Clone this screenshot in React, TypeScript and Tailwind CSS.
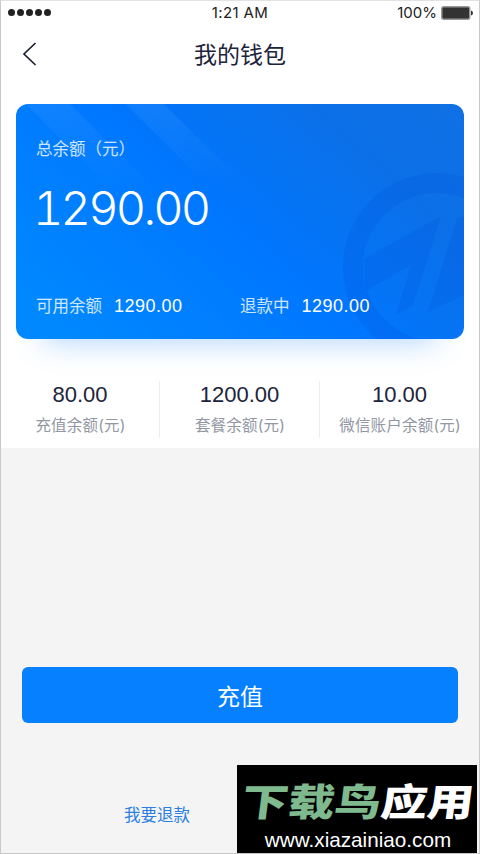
import React from "react";

const stats = [
    { value: "80.00", label: "充值余额(元)" },
    { value: "1200.00", label: "套餐余额(元)" },
    { value: "10.00", label: "微信账户余额(元)" },
];

const StatusBar: React.FC = () => (
    <div className="grid h-[23px] grid-cols-3 items-center pl-[7px] pr-[6px] text-[#222]">
        <div className="flex gap-[2px]">
            {[0, 1, 2, 3, 4].map(i => <span key={i} className="h-[7px] w-[7px] rounded-full bg-[#222]" />)}
        </div>
        <span className="pr-[1px] text-center text-[15px] leading-[22px] tracking-[0.4px]">1:21 AM</span>
        <div className="flex items-center justify-end gap-[4px]">
            <span className="text-[15px] leading-[22px]">100%</span>
            <svg width="32" height="14" viewBox="0 0 32 14">
                <rect x="0.75" y="0.75" width="28" height="12.5" rx="2" fill="#333" stroke="#999" strokeWidth="1.5" />
                <path d="M30 4.5 Q32 5 32 7 Q32 9 30 9.5 Z" fill="#333" />
            </svg>
        </div>
    </div>
);

const CardArt: React.FC = () => (
    <svg className="absolute inset-0" width="448" height="235" viewBox="0 0 448 235">
        <defs>
            <linearGradient id="beam" x1="0" y1="0" x2="0" y2="1">
                <stop offset="0" stopColor="#fff" stopOpacity="0.06" />
                <stop offset="1" stopColor="#fff" stopOpacity="0" />
            </linearGradient>
        </defs>
        <path d="M10 0 H54 L144 90 H100 Z" fill="url(#beam)" />
        <path d="M110 0 H148 L226 78 H188 Z" fill="url(#beam)" />
        <g fill="#004fd6" fillOpacity="0.18">
            <path fillRule="evenodd" d="M421 69 a94 94 0 1 0 0.01 0 Z M421 89 a74 74 0 1 1 -0.01 0 Z" />
            <path d="M348 155 L425 112 L397 201 L380 211 L395 161 L350 187 Z" />
            <path d="M441 115 L448 112 V191 L412 208 Z" />
        </g>
    </svg>
);

const BalanceCard: React.FC = () => (
    <div className="relative mx-[15px] mt-[16px] h-[235px] rounded-xl shadow-[0_30px_28px_-28px_rgba(60,150,255,0.42)]">
        <div className="relative flex h-full flex-col overflow-hidden rounded-xl bg-[linear-gradient(42deg,#0088ff_8%,#0077ff_48%,#0b70e8_78%,#1070e4_100%)] pl-[20px] text-white">
            <CardArt />
            <p className="relative mt-[32px] text-[16.5px] leading-[26px] text-white/80">总余额（元）</p>
            <p className="relative -ml-[3px] mt-[17px] text-[47px] font-light leading-[58px] tabular-nums tracking-[-2.8px]">1290.00</p>
            <div className="relative mt-[56px] flex text-[16.5px] leading-[26px]">
                <p className="w-[204px]">
                    <span className="text-white/80">可用余额</span>
                    <span className="ml-[12px] font-['Liberation_Sans'] text-[18px] tracking-[0.5px]">1290.00</span>
                </p>
                <p>
                    <span className="text-white/80">退款中</span>
                    <span className="ml-[12px] font-['Liberation_Sans'] text-[18px] tracking-[0.5px]">1290.00</span>
                </p>
            </div>
        </div>
    </div>
);

const Watermark: React.FC = () => (
    <div className="absolute bottom-0 right-[2px] flex h-[88px] w-[240px] flex-col items-center overflow-hidden bg-black pl-[2px]">
        <p className="mt-[15px] origin-center -skew-x-6 scale-x-[1.22] whitespace-nowrap text-[38px] font-black leading-[44px] text-white">
            <span className="text-[#7fb98e]">下载鸟</span>应用
        </p>
        <p className="mt-[4px] font-['Liberation_Sans'] text-[20.7px] leading-[24px] text-white">www.xiazainiao.com</p>
    </div>
);

export default function App() {
    return (
        <div className="relative flex h-[854px] w-[480px] flex-col overflow-hidden border border-[#c8c8c8] border-t-[#e2e2e2] bg-[#f4f4f4] font-['Inter','Noto_Sans_CJK_SC',sans-serif]">
            <div className="h-[447px] bg-white">
                <StatusBar />
                <header className="relative flex h-[64px] items-center justify-center">
                    <svg className="absolute left-[20px] top-[18px]" width="16" height="24" viewBox="0 0 16 24" fill="none" stroke="#1b1f30" strokeWidth="1.7">
                        <path d="M14.5 1 L3 12 L14.5 23" />
                    </svg>
                    <h1 className="pb-[2px] text-[23px] text-[#20243a]">我的钱包</h1>
                </header>
                <BalanceCard />
                <div className="mt-[42px] grid h-[56px] grid-cols-[159px_160px_159px] divide-x divide-[#eeeeee]">
                    {stats.map(s => (
                        <div key={s.label} className="text-center">
                            <p className="font-['Liberation_Sans'] text-[22px] leading-[28px] text-[#20243a]">{s.value}</p>
                            <p className="ml-[1px] mt-[5px] whitespace-nowrap text-[15.5px] leading-[24px] tracking-[0.2px] text-[#9297a3]">{s.label}</p>
                        </div>
                    ))}
                </div>
            </div>
            <button className="mx-[21px] mt-[219px] h-[56px] rounded-[6px] bg-[#0780ff] pt-[4px] text-[23px] text-white">充值</button>
            <a className="ml-[123px] mt-[79px] self-start text-[16.5px] leading-[26px] text-[#2a7fe0]">我要退款</a>
            <Watermark />
        </div>
    );
}
